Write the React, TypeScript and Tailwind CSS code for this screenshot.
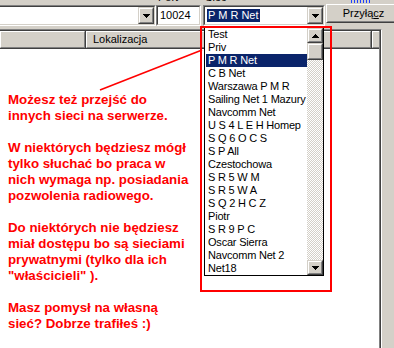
import React from "react";

function Arrow({ up = false }: { up?: boolean }) {
  const rows = up ? [1, 3, 5, 7] : [7, 5, 3, 1];
  return (
    <svg width="7" height="4" viewBox="0 0 7 4" shapeRendering="crispEdges">
      {rows.map((w, i) => (
        <rect key={i} x={(7 - w) / 2} y={i} width={w} height={1} fill="#000" />
      ))}
    </svg>
  );
}

function Raised({ className = "", children }: { className?: string; children?: React.ReactNode }) {
  return (
    <div className={"border border-t-[#d4d0c8] border-l-[#d4d0c8] border-b-[#404040] border-r-[#404040] shrink-0 " + className}>
      <div className="w-full h-full border border-t-white border-l-white border-b-[#808080] border-r-[#808080] bg-[#d4d0c8] flex items-center justify-center">
        {children}
      </div>
    </div>
  );
}

function Sunken({ className = "", children }: { className?: string; children?: React.ReactNode }) {
  return (
    <div className={"border border-t-[#808080] border-l-[#808080] border-b-white border-r-white shrink-0 " + className}>
      <div className="w-full h-full border border-t-[#404040] border-l-[#404040] border-b-[#d4d0c8] border-r-[#d4d0c8] bg-white flex items-center">
        {children}
      </div>
    </div>
  );
}

function HeaderCell({ className = "", children }: { className?: string; children?: React.ReactNode }) {
  return (
    <div className={"h-[18px] border-b border-r border-b-[#404040] border-r-[#404040] shrink-0 " + className}>
      <div className="w-full h-full border border-t-white border-l-white border-b-[#808080] border-r-[#808080] bg-[#d4d0c8] flex items-center pl-[6px] leading-[13px]">
        {children}
      </div>
    </div>
  );
}

const items = [
  "Test",
  "Priv",
  "P M R Net",
  "C B Net",
  "Warszawa P M R",
  "Sailing Net 1 Mazury",
  "Navcomm Net",
  "U S 4 L E H Homep",
  "S Q 6 O C S",
  "S P All",
  "Czestochowa",
  "S R 5 W M",
  "S R 5 W A",
  "S Q 2 H C Z",
  "Piotr",
  "S R 9 P C",
  "Oscar Sierra",
  "Navcomm Net 2",
  "Net18",
];

export default function App() {
  return (
    <div className="relative w-[394px] h-[348px] overflow-hidden bg-[#d4d0c8] font-['Liberation_Sans',Arial,sans-serif] text-[11px] text-black">
      {/* cut-off labels strip */}
      <div className="h-[4px] flex items-end overflow-hidden">
        <div className="ml-[158px] h-[13px] leading-[13px] shrink-0">Port</div>
        <div className="ml-[27px] h-[13px] leading-[13px] shrink-0">Sieć</div>
        <svg className="ml-[124px] shrink-0 self-start" width="22" height="4" viewBox="0 0 22 4" shapeRendering="crispEdges">
          {[0, 3, 6, 9, 12, 15, 18].map((x) => (
            <rect key={x} x={x} y={0} width={1} height={3} fill="#2040ff" />
          ))}
        </svg>
      </div>

      {/* fields row */}
      <div className="flex items-start h-[22px]">
        <Sunken className="-ml-[2px] mt-[1px] w-[158px] h-[21px]">
          <div className="flex-1" />
          <Raised className="w-[16px] h-[17px]">
            <Arrow />
          </Raised>
        </Sunken>
        <Sunken className="mt-[1px] w-[45px] h-[21px]">
          <span className="pl-[2px] leading-[13px]">10024</span>
        </Sunken>
        <Sunken className="ml-[2px] mt-[1px] w-[122px] h-[21px]">
          <div className="flex-1 pl-[2px] flex items-center">
            <span className="bg-[#0a246a] text-white px-[1px] h-[13px] leading-[13px]">P M R Net</span>
          </div>
          <Raised className="w-[16px] h-[17px]">
            <Arrow />
          </Raised>
        </Sunken>
        <div className="ml-[1px] border border-t-white border-l-white border-b-[#404040] border-r-[#404040] w-[75px] h-[19px] shrink-0">
          <div className="w-full h-full border border-t-[#d4d0c8] border-l-[#d4d0c8] border-b-[#808080] border-r-[#808080] flex items-center justify-center leading-[13px]">
            <span>
              Przyłą<span className="underline underline-offset-[1px]">c</span>z
            </span>
          </div>
        </div>
      </div>

      {/* list view */}
      <div className="mt-[3px] w-[382px] h-[320px] border-t border-r border-t-[#808080] border-r-white">
        <div className="w-full h-full border-t border-r border-t-[#404040] border-r-[#404040] flex flex-col">
          <div className="w-full flex-1 border-r border-r-[#808080] flex flex-col">
            <div className="flex h-[18px] overflow-hidden">
              <HeaderCell className="w-[86px]" />
              <HeaderCell className="w-[224px]">Lokalizacja</HeaderCell>
              <HeaderCell className="w-[62px]" />
              <HeaderCell className="flex-1" />
            </div>
            <div className="flex-1 bg-white pt-[43px] pl-[8px] text-[#ff0000] font-bold text-[13.3px] leading-[16px] whitespace-nowrap">
              <p>Możesz też przejść do</p>
              <p>innych sieci na serwerze.</p>
              <p className="mt-[16px]">W niektórych będziesz mógł</p>
              <p>tylko słuchać bo praca w</p>
              <p>nich wymaga np. posiadania</p>
              <p>pozwolenia radiowego.</p>
              <p className="mt-[16px]">Do niektórych nie będziesz</p>
              <p>miał dostępu bo są sieciami</p>
              <p>prywatnymi (tylko dla ich</p>
              <p>"właścicieli" ).</p>
              <p className="mt-[16px]">Masz pomysł na własną</p>
              <p>sieć? Dobrze trafiłeś :)</p>
            </div>
          </div>
        </div>
      </div>

      {/* dropdown list popup */}
      <div className="absolute left-[204px] top-[27px] w-[120px] h-[249px] border border-black bg-white flex">
        <div className="flex-1 flex flex-col pt-0 pl-[1px]">
          {items.map((it) => (
            <div
              key={it}
              className={
                "h-[13px] leading-[13px] pl-[2px] whitespace-nowrap overflow-hidden tracking-[-0.2px] " +
                (it === "P M R Net" ? "bg-[#0a246a] text-white" : "")
              }
            >
              {it}
            </div>
          ))}
        </div>
        <div className="w-[16px] flex flex-col bg-[image:repeating-conic-gradient(#ffffff_0%_25%,#d4d0c8_0%_50%)] bg-[length:2px_2px]">
          <Raised className="w-[16px] h-[15px]">
            <Arrow up />
          </Raised>
          <Raised className="w-[16px] h-[17px]" />
          <div className="flex-1" />
          <Raised className="w-[16px] h-[15px]">
            <Arrow />
          </Raised>
        </div>
      </div>

      {/* red annotation frame */}
      <div className="absolute left-[200px] top-[26px] w-[132px] h-[266px] border-2 border-[#ff0000] pointer-events-none" />

      {/* red annotation line */}
      <svg className="absolute left-0 top-0 pointer-events-none" width="394" height="348" viewBox="0 0 394 348">
        <line x1="100" y1="90" x2="202" y2="50" stroke="#ff0000" strokeWidth="1.6" />
      </svg>
    </div>
  );
}
